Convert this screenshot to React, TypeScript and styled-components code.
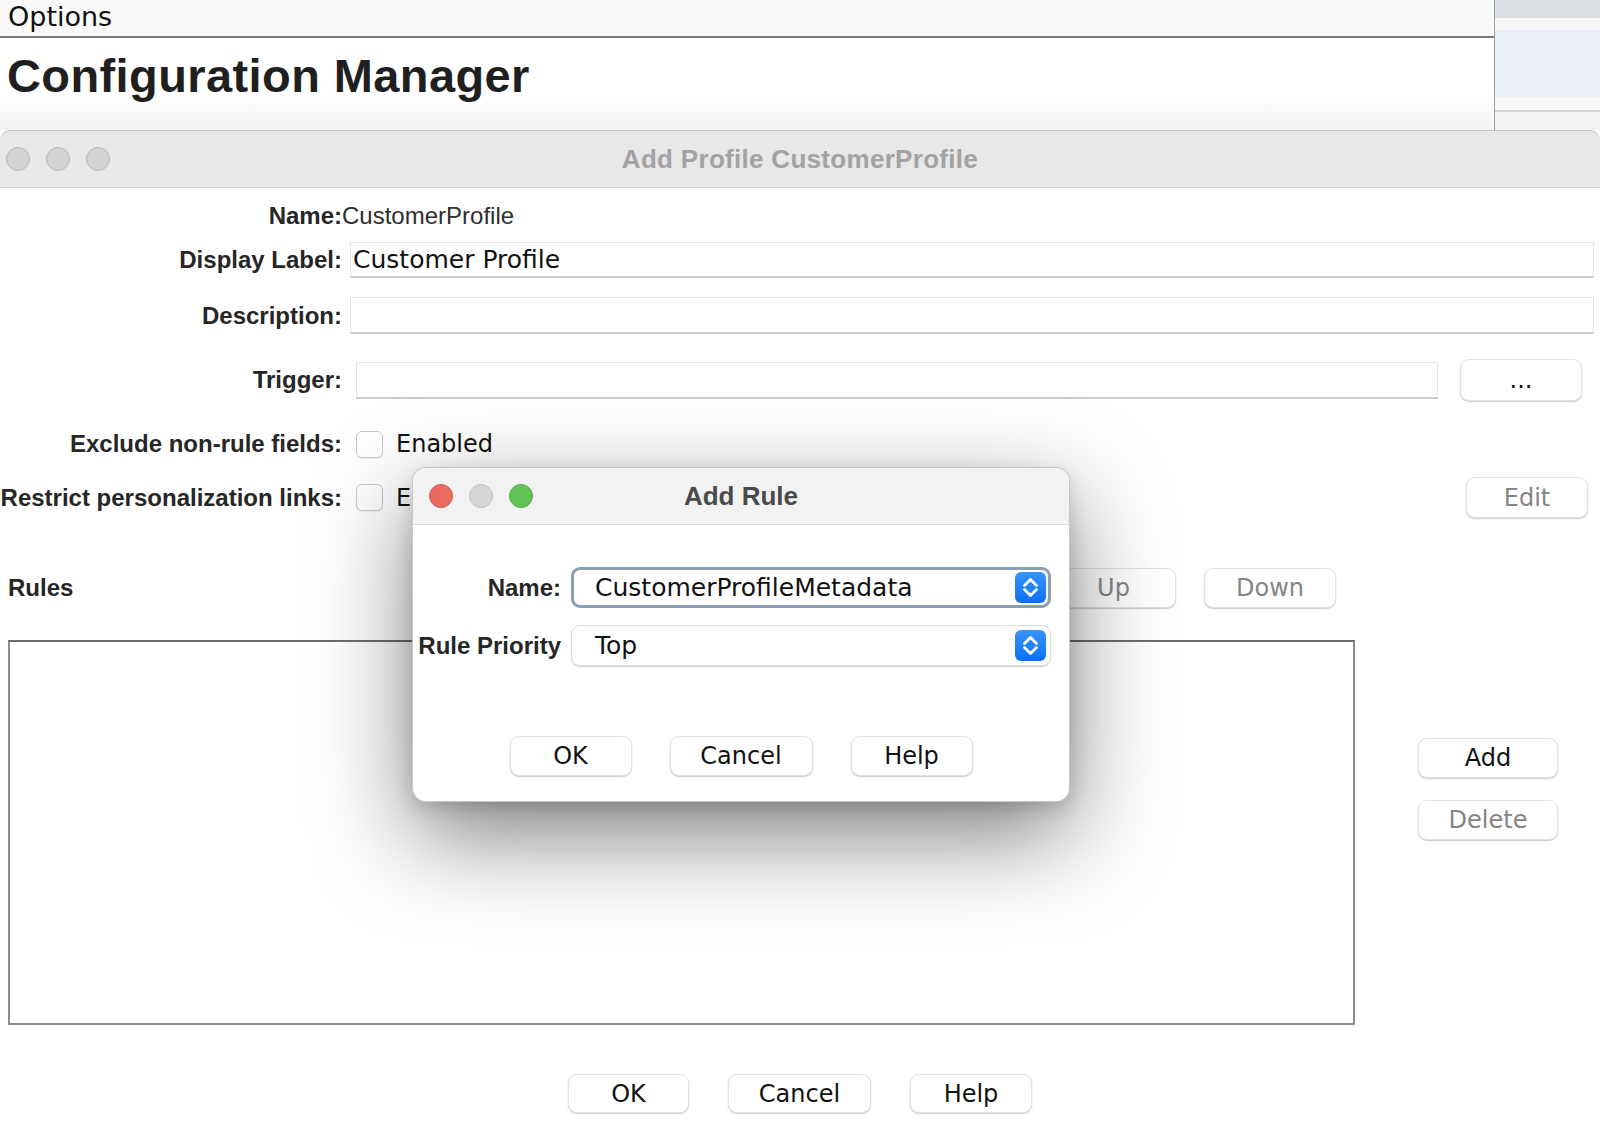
import React from "react"
import styled, { createGlobalStyle } from "styled-components"

const GlobalStyle = createGlobalStyle`
	html, body {
		margin: 0;
		padding: 0;
		background: #ffffff;
	}
	body {
		width: 1600px;
		height: 1124px;
		overflow: hidden;
		font-family: "Liberation Sans", Arial, sans-serif;
	}
	* {
		box-sizing: border-box;
	}
`

const SIDE_BANDS = [
	{ h: 18, bg: "#dadee3" },
	{ h: 12, bg: "#f8f8f8" },
	{ h: 67, bg: "#ebeff7" },
	{ h: 13, bg: "#f7f7f7" },
	{ h: 2, bg: "#d2d2d2" },
	{ h: 18, bg: "#f4f4f4" },
]

const Chevrons = () => (
	<svg width="31" height="31" viewBox="0 0 31 31" fill="none">
		<path d="M9.5 13.5 L15.5 7.5 L21.5 13.5" stroke="#fff" strokeWidth="2.8" strokeLinecap="round" strokeLinejoin="round" />
		<path d="M9.5 17.5 L15.5 23.5 L21.5 17.5" stroke="#fff" strokeWidth="2.8" strokeLinecap="round" strokeLinejoin="round" />
	</svg>
)

const App: React.FC = () => {
	return (
		<Page>
			<GlobalStyle />

			<TopArea>
				<HeaderColumn>
					<OptionsBar>Options</OptionsBar>
					<HeadingArea>
						<Heading>Configuration Manager</Heading>
					</HeadingArea>
				</HeaderColumn>
				<SideStrip>
					{SIDE_BANDS.map((band, index) => (
						<Band key={index} $h={band.h} $bg={band.bg} />
					))}
				</SideStrip>
			</TopArea>

			<Window>
				<TitleBar>
					<Lights $pad={6}>
						<Light $color="#d3d3d3" $border="#b9b9b9" />
						<Light $color="#d3d3d3" $border="#b9b9b9" />
						<Light $color="#d3d3d3" $border="#b9b9b9" />
					</Lights>
					<WindowTitle>Add Profile CustomerProfile</WindowTitle>
					<span />
				</TitleBar>

				<FormRow $mt={12} $h={32} $gap={0}>
					<Label>Name:</Label>
					<PlainValue>CustomerProfile</PlainValue>
				</FormRow>

				<FormRow $mt={10} $h={36}>
					<Label>Display Label:</Label>
					<Field>
						<TextInput $right={6}>Customer Profile</TextInput>
					</Field>
				</FormRow>

				<FormRow $mt={19} $h={37}>
					<Label>Description:</Label>
					<Field>
						<TextInput $right={6} />
					</Field>
				</FormRow>

				<FormRow $mt={25} $h={42}>
					<Label>Trigger:</Label>
					<Field>
						<TextInput $left={6} $h={37} />
						<Button $w={122} $h={42} $ml={22} $mr={18}>
							...
						</Button>
					</Field>
				</FormRow>

				<FormRow $mt={29} $h={27}>
					<Label>Exclude non-rule fields:</Label>
					<Field>
						<Checkbox />
						<CheckText>Enabled</CheckText>
					</Field>
				</FormRow>

				<FormRow $mt={20} $h={41}>
					<Label>Restrict personalization links:</Label>
					<Field>
						<Checkbox />
						<CheckText>Enabled</CheckText>
						<Button $w={122} $h={41} $ml="auto" $mr={12} $muted>
							Edit
						</Button>
					</Field>
				</FormRow>

				<RulesHeader>
					<RulesLabel>Rules</RulesLabel>
					<Button $w={125} $h={40} $muted>
						Up
					</Button>
					<Button $w={132} $h={40} $ml={28} $mr={264} $muted>
						Down
					</Button>
				</RulesHeader>

				<ListArea>
					<ListBox />
					<SideButtons>
						<Button $w={140} $h={40}>
							Add
						</Button>
						<Button $w={140} $h={40} $muted>
							Delete
						</Button>
					</SideButtons>
				</ListArea>

				<Footer $gap={39} $mt={49}>
					<Button $w={121} $h={39}>
						OK
					</Button>
					<Button $w={143} $h={39}>
						Cancel
					</Button>
					<Button $w={122} $h={39}>
						Help
					</Button>
				</Footer>
			</Window>

			<RuleDialog>
				<DialogTitleBar>
					<Lights $pad={16}>
						<Light $color="#ec6a5e" $border="#d5574b" />
						<Light $color="#d6d6d6" $border="#c0c0c0" />
						<Light $color="#61c454" $border="#4fae43" />
					</Lights>
					<DialogTitle>Add Rule</DialogTitle>
					<span />
				</DialogTitleBar>

				<DialogRow $mt={42}>
					<Label>Name:</Label>
					<Combo $focused>
						<ComboText>CustomerProfileMetadata</ComboText>
						<ComboArrow>
							<Chevrons />
						</ComboArrow>
					</Combo>
				</DialogRow>

				<DialogRow $mt={17}>
					<Label>Rule Priority</Label>
					<Combo>
						<ComboText>Top</ComboText>
						<ComboArrow>
							<Chevrons />
						</ComboArrow>
					</Combo>
				</DialogRow>

				<Footer $gap={38} $mt={70}>
					<Button $w={122} $h={40}>
						OK
					</Button>
					<Button $w={143} $h={40}>
						Cancel
					</Button>
					<Button $w={122} $h={40}>
						Help
					</Button>
				</Footer>
			</RuleDialog>
		</Page>
	)
}

export default App

const Page = styled.div`
	position: relative;
	width: 1600px;
	height: 1124px;
	overflow: hidden;
	background: #ffffff;
`

const TopArea = styled.div`
	display: flex;
	height: 130px;
`

const HeaderColumn = styled.div`
	flex: 1;
	display: flex;
	flex-direction: column;
`

const OptionsBar = styled.div`
	height: 38px;
	padding-left: 8px;
	background: #f9f9f9;
	border-bottom: 2px solid #7b7b7b;
	font-family: "DejaVu Sans", sans-serif;
	font-size: 27px;
	line-height: 34px;
	color: #111;
`

const HeadingArea = styled.div`
	flex: 1;
	padding: 11px 0 0 7px;
	background: linear-gradient(#ffffff 0%, #ffffff 60%, #f3f3f3 100%);
`

const Heading = styled.h1`
	margin: 0;
	font-family: "Liberation Sans", Arial, sans-serif;
	font-weight: 700;
	font-size: 47px;
	letter-spacing: 0.4px;
	line-height: 54px;
	color: #1f1f1f;
`

const SideStrip = styled.div`
	width: 106px;
	display: flex;
	flex-direction: column;
	border-left: 1px solid #9c9c9c;
`

const Band = styled.div<{ $h: number; $bg: string }>`
	height: ${({ $h }) => $h}px;
	background: ${({ $bg }) => $bg};
`

const Window = styled.div`
	display: flex;
	flex-direction: column;
`

const TitleBar = styled.div`
	display: grid;
	grid-template-columns: 1fr auto 1fr;
	align-items: center;
	height: 58px;
	background: #e7e8e7;
	border-top: 1px solid #c6c6c6;
	border-bottom: 1px solid #d6d6d6;
	border-radius: 10px 10px 0 0;
`

const Lights = styled.div<{ $pad: number }>`
	display: flex;
	gap: 16px;
	padding-left: ${({ $pad }) => $pad}px;
`

const Light = styled.span<{ $color: string; $border: string }>`
	width: 24px;
	height: 24px;
	border-radius: 50%;
	background: ${({ $color }) => $color};
	border: 1px solid ${({ $border }) => $border};
`

const WindowTitle = styled.div`
	font-weight: 700;
	font-size: 26px;
	letter-spacing: 0.3px;
	color: #a2a2a2;
`

const FormRow = styled.div<{ $mt: number; $h: number; $gap?: number }>`
	display: grid;
	grid-template-columns: 342px 1fr;
	column-gap: ${({ $gap }) => ($gap === undefined ? 8 : $gap)}px;
	align-items: center;
	margin-top: ${({ $mt }) => $mt}px;
	height: ${({ $h }) => $h}px;
`

const Label = styled.div`
	text-align: right;
	white-space: nowrap;
	font-family: "Liberation Sans", Arial, sans-serif;
	font-weight: 700;
	font-size: 24px;
	color: #262626;
`

const PlainValue = styled.div`
	font-size: 24px;
	color: #2e2e2e;
`

const Field = styled.div`
	display: flex;
	align-items: center;
	height: 100%;
`

const TextInput = styled.div<{ $left?: number; $right?: number; $h?: number }>`
	flex: 1;
	height: ${({ $h }) => ($h ? `${$h}px` : "100%")};
	margin-left: ${({ $left }) => $left || 0}px;
	margin-right: ${({ $right }) => $right || 0}px;
	padding-left: 2px;
	display: flex;
	align-items: center;
	background: #ffffff;
	border: 1px solid #e6e6e6;
	border-bottom: 2px solid #cbcbcb;
	font-family: "DejaVu Sans", sans-serif;
	font-size: 25px;
	color: #111;
	white-space: nowrap;
`

const Button = styled.button<{
	$w: number
	$h: number
	$ml?: number | string
	$mr?: number
	$muted?: boolean
}>`
	width: ${({ $w }) => $w}px;
	height: ${({ $h }) => $h}px;
	margin-left: ${({ $ml }) => (typeof $ml === "string" ? $ml : `${$ml || 0}px`)};
	margin-right: ${({ $mr }) => $mr || 0}px;
	flex-shrink: 0;
	padding: 0;
	background: #ffffff;
	border: 1px solid #e2e2e2;
	border-radius: 9px;
	box-shadow: 0 1px 1.5px rgba(0, 0, 0, 0.22);
	font-family: "DejaVu Sans", sans-serif;
	font-size: 24px;
	color: ${({ $muted }) => ($muted ? "#858585" : "#111111")};
	cursor: default;
`

const Checkbox = styled.span`
	width: 27px;
	height: 27px;
	margin-left: 6px;
	flex-shrink: 0;
	background: #ffffff;
	border: 1px solid #c8c8c8;
	border-radius: 6px;
	box-shadow: 0 1px 1px rgba(0, 0, 0, 0.06);
`

const CheckText = styled.span`
	margin-left: 13px;
	font-family: "DejaVu Sans", sans-serif;
	font-size: 24px;
	color: #111;
`

const RulesHeader = styled.div`
	display: flex;
	align-items: center;
	height: 40px;
	margin-top: 50px;
`

const RulesLabel = styled.div`
	flex: 1;
	padding-left: 8px;
	font-weight: 700;
	font-size: 24px;
	color: #262626;
`

const ListArea = styled.div`
	display: flex;
	margin-top: 32px;
`

const ListBox = styled.div`
	width: 1347px;
	height: 385px;
	margin-left: 8px;
	background: #ffffff;
	border: 2px solid #8c8c8c;
	border-top-color: #6c6c6c;
`

const SideButtons = styled.div`
	display: flex;
	flex-direction: column;
	gap: 22px;
	margin-left: 63px;
	padding-top: 98px;
`

const Footer = styled.div<{ $gap: number; $mt: number }>`
	display: flex;
	justify-content: center;
	gap: ${({ $gap }) => $gap}px;
	margin-top: ${({ $mt }) => $mt}px;
`

const RuleDialog = styled.div`
	position: absolute;
	left: 412px;
	top: 467px;
	width: 658px;
	height: 335px;
	background: #ffffff;
	border: 1px solid rgba(0, 0, 0, 0.22);
	border-radius: 14px;
	overflow: hidden;
	box-shadow: 0 34px 95px rgba(0, 0, 0, 0.5), 0 6px 18px rgba(0, 0, 0, 0.14);
`

const DialogTitleBar = styled.div`
	display: grid;
	grid-template-columns: 1fr auto 1fr;
	align-items: center;
	height: 57px;
	background: #f1f2f1;
	border-bottom: 1px solid #dadada;
`

const DialogTitle = styled.div`
	font-weight: 700;
	font-size: 26px;
	color: #4a4a4a;
`

const DialogRow = styled.div<{ $mt: number }>`
	display: grid;
	grid-template-columns: 148px 1fr;
	column-gap: 10px;
	align-items: center;
	height: 41px;
	margin-top: ${({ $mt }) => $mt}px;
	padding-right: 18px;
`

const Combo = styled.div<{ $focused?: boolean }>`
	display: flex;
	align-items: center;
	height: 41px;
	padding-left: ${({ $focused }) => ($focused ? 21 : 23)}px;
	padding-right: ${({ $focused }) => ($focused ? 2 : 4)}px;
	background: #ffffff;
	border: ${({ $focused }) => ($focused ? "3px solid #8c9db9" : "1px solid #dedede")};
	border-radius: 9px;
	box-shadow: ${({ $focused }) => ($focused ? "none" : "0 1px 1.5px rgba(0, 0, 0, 0.2)")};
`

const ComboText = styled.span`
	flex: 1;
	font-family: "DejaVu Sans", sans-serif;
	font-size: 25px;
	color: #111;
	white-space: nowrap;
`

const ComboArrow = styled.span`
	display: flex;
	width: 31px;
	height: 31px;
	border-radius: 6px;
	background: linear-gradient(#3995fb, #0b6ff2);
`
